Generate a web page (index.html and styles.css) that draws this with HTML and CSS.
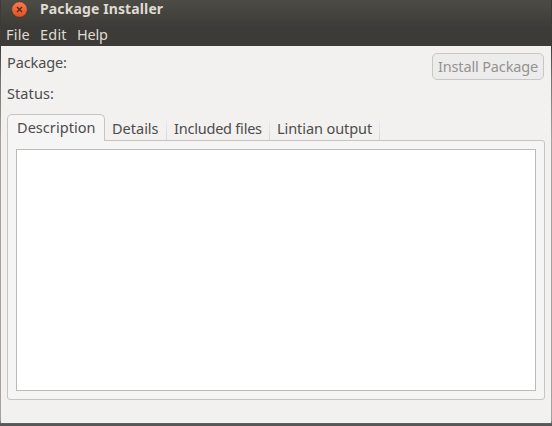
FILE: index.html
```html
<!DOCTYPE html>
<html lang="en">
<head>
<meta charset="utf-8">
<title>Package Installer</title>
<link rel="stylesheet" href="styles.css">
</head>
<body>
<div class="window">
  <header class="chrome">
    <div class="titlebar">
      <svg class="close" width="18" height="18" viewBox="0 0 18 18">
        <defs><linearGradient id="orange" x1="0" y1="0" x2="0" y2="1"><stop offset="0" stop-color="#f67b52"/><stop offset="1" stop-color="#e4501f"/></linearGradient></defs>
        <circle cx="9.5" cy="9.5" r="7.8" fill="url(#orange)" stroke="#34332e" stroke-width=".6"/>
        <path d="M7 7l5 5M12 7l-5 5" stroke="#4a2a1c" stroke-width="1.3"/>
      </svg>
      <span class="title">Package Installer</span>
    </div>
    <nav class="menu"><span class="m-file">File</span><span class="m-edit">Edit</span><span class="m-help">Help</span></nav>
  </header>
  <main>
    <div class="info">
      <div class="labels"><span class="l-package">Package:</span><span class="l-status">Status:</span></div>
      <button class="install" disabled><span>Install Package</span></button>
    </div>
    <div class="tabs">
      <div class="tab active"><span class="t-desc">Description</span></div>
      <div class="tab details"><span class="t-details">Details</span></div>
      <div class="tab files"><span class="t-files">Included files</span></div>
      <div class="tab lintian"><span class="t-lintian">Lintian output</span></div>
    </div>
    <section class="panel"><div class="text"></div></section>
  </main>
</div>
</body>
</html>
```
FILE: styles.css
```css
* { box-sizing: border-box; }
body {
  margin: 0;
  width: 552px;
  height: 426px;
  overflow: hidden;
  padding: 0 1px 3px;
  background: linear-gradient(#3c3b37 0, #3c3b37 46px, #77736e 80px, #a5a19c 140px, #a5a19c 420px, #55575a 424px);
  font: 14.5px/20px "Noto Sans", "Open Sans", sans-serif;
  color: #4c4c4c;
}
span { white-space: nowrap; }
.window { height: 423px; background: #f2f1f0; display: flex; flex-direction: column; }
.chrome { height: 46px; background: linear-gradient(#4d4b45, #3c3b37 28px); color: #dfdbd2; }
.titlebar { height: 24px; display: flex; align-items: flex-start; padding-left: 9px; }
.close { margin-right: 12px; flex: none; }
.title { font-weight: 700; line-height: 18px; font-size: 14px; letter-spacing: 0.12px; }
.menu { display: flex; }
.menu span { line-height: 21px; }
.m-file { width: 34px; margin-left: 5px; letter-spacing: 0.2px; }
.m-edit { width: 37px; letter-spacing: 0.2px; }
.m-help { letter-spacing: -0.2px; }
main { flex: 1; padding: 7px 6px 0; }
.info { height: 61px; display: flex; justify-content: space-between; }
.labels { display: flex; flex-direction: column; gap: 11px; margin-top: -1px; }
.l-package { letter-spacing: -0.12px; }
.l-status { letter-spacing: 0.08px; }
.install {
  width: 112px;
  height: 27px;
  margin-right: 1px;
  padding: 0 0 2px;
  border: 1px solid #c9c7c5;
  border-radius: 5px;
  background: #edecec;
  font: inherit;
  letter-spacing: -0.15px;
  color: #949290;
}
.tabs { height: 27px; display: flex; align-items: flex-end; }
.tab { height: 23px; margin-bottom: 1px; padding: 1px 0 0 7px; border-right: 1px solid; border-image: linear-gradient(#f2f1f0, #d6d3cf) 1; }
.tab.active {
  width: 98px;
  height: 27px;
  margin-bottom: 0;
  padding: 2px 0 0 9px;
  border: 1px solid #c8c4c0;
  border-bottom: 0;
  border-image: none;
  border-radius: 5px 5px 0 0;
  background: #f6f5f5;
  position: relative;
  z-index: 1;
}
.details { width: 62px; }
.files { width: 103px; letter-spacing: -0.22px; }
.lintian { width: 110px; letter-spacing: -0.08px; }
.t-desc { letter-spacing: 0.05px; }
.panel {
  height: 260px;
  margin-top: -1px;
  padding: 8px;
  border: 1px solid #c8c4c0;
  border-radius: 0 3px 3px 3px;
  background: #f6f5f5;
}
.text { height: 242px; border: 1px solid #bfbab4; background: #fff; }
```
